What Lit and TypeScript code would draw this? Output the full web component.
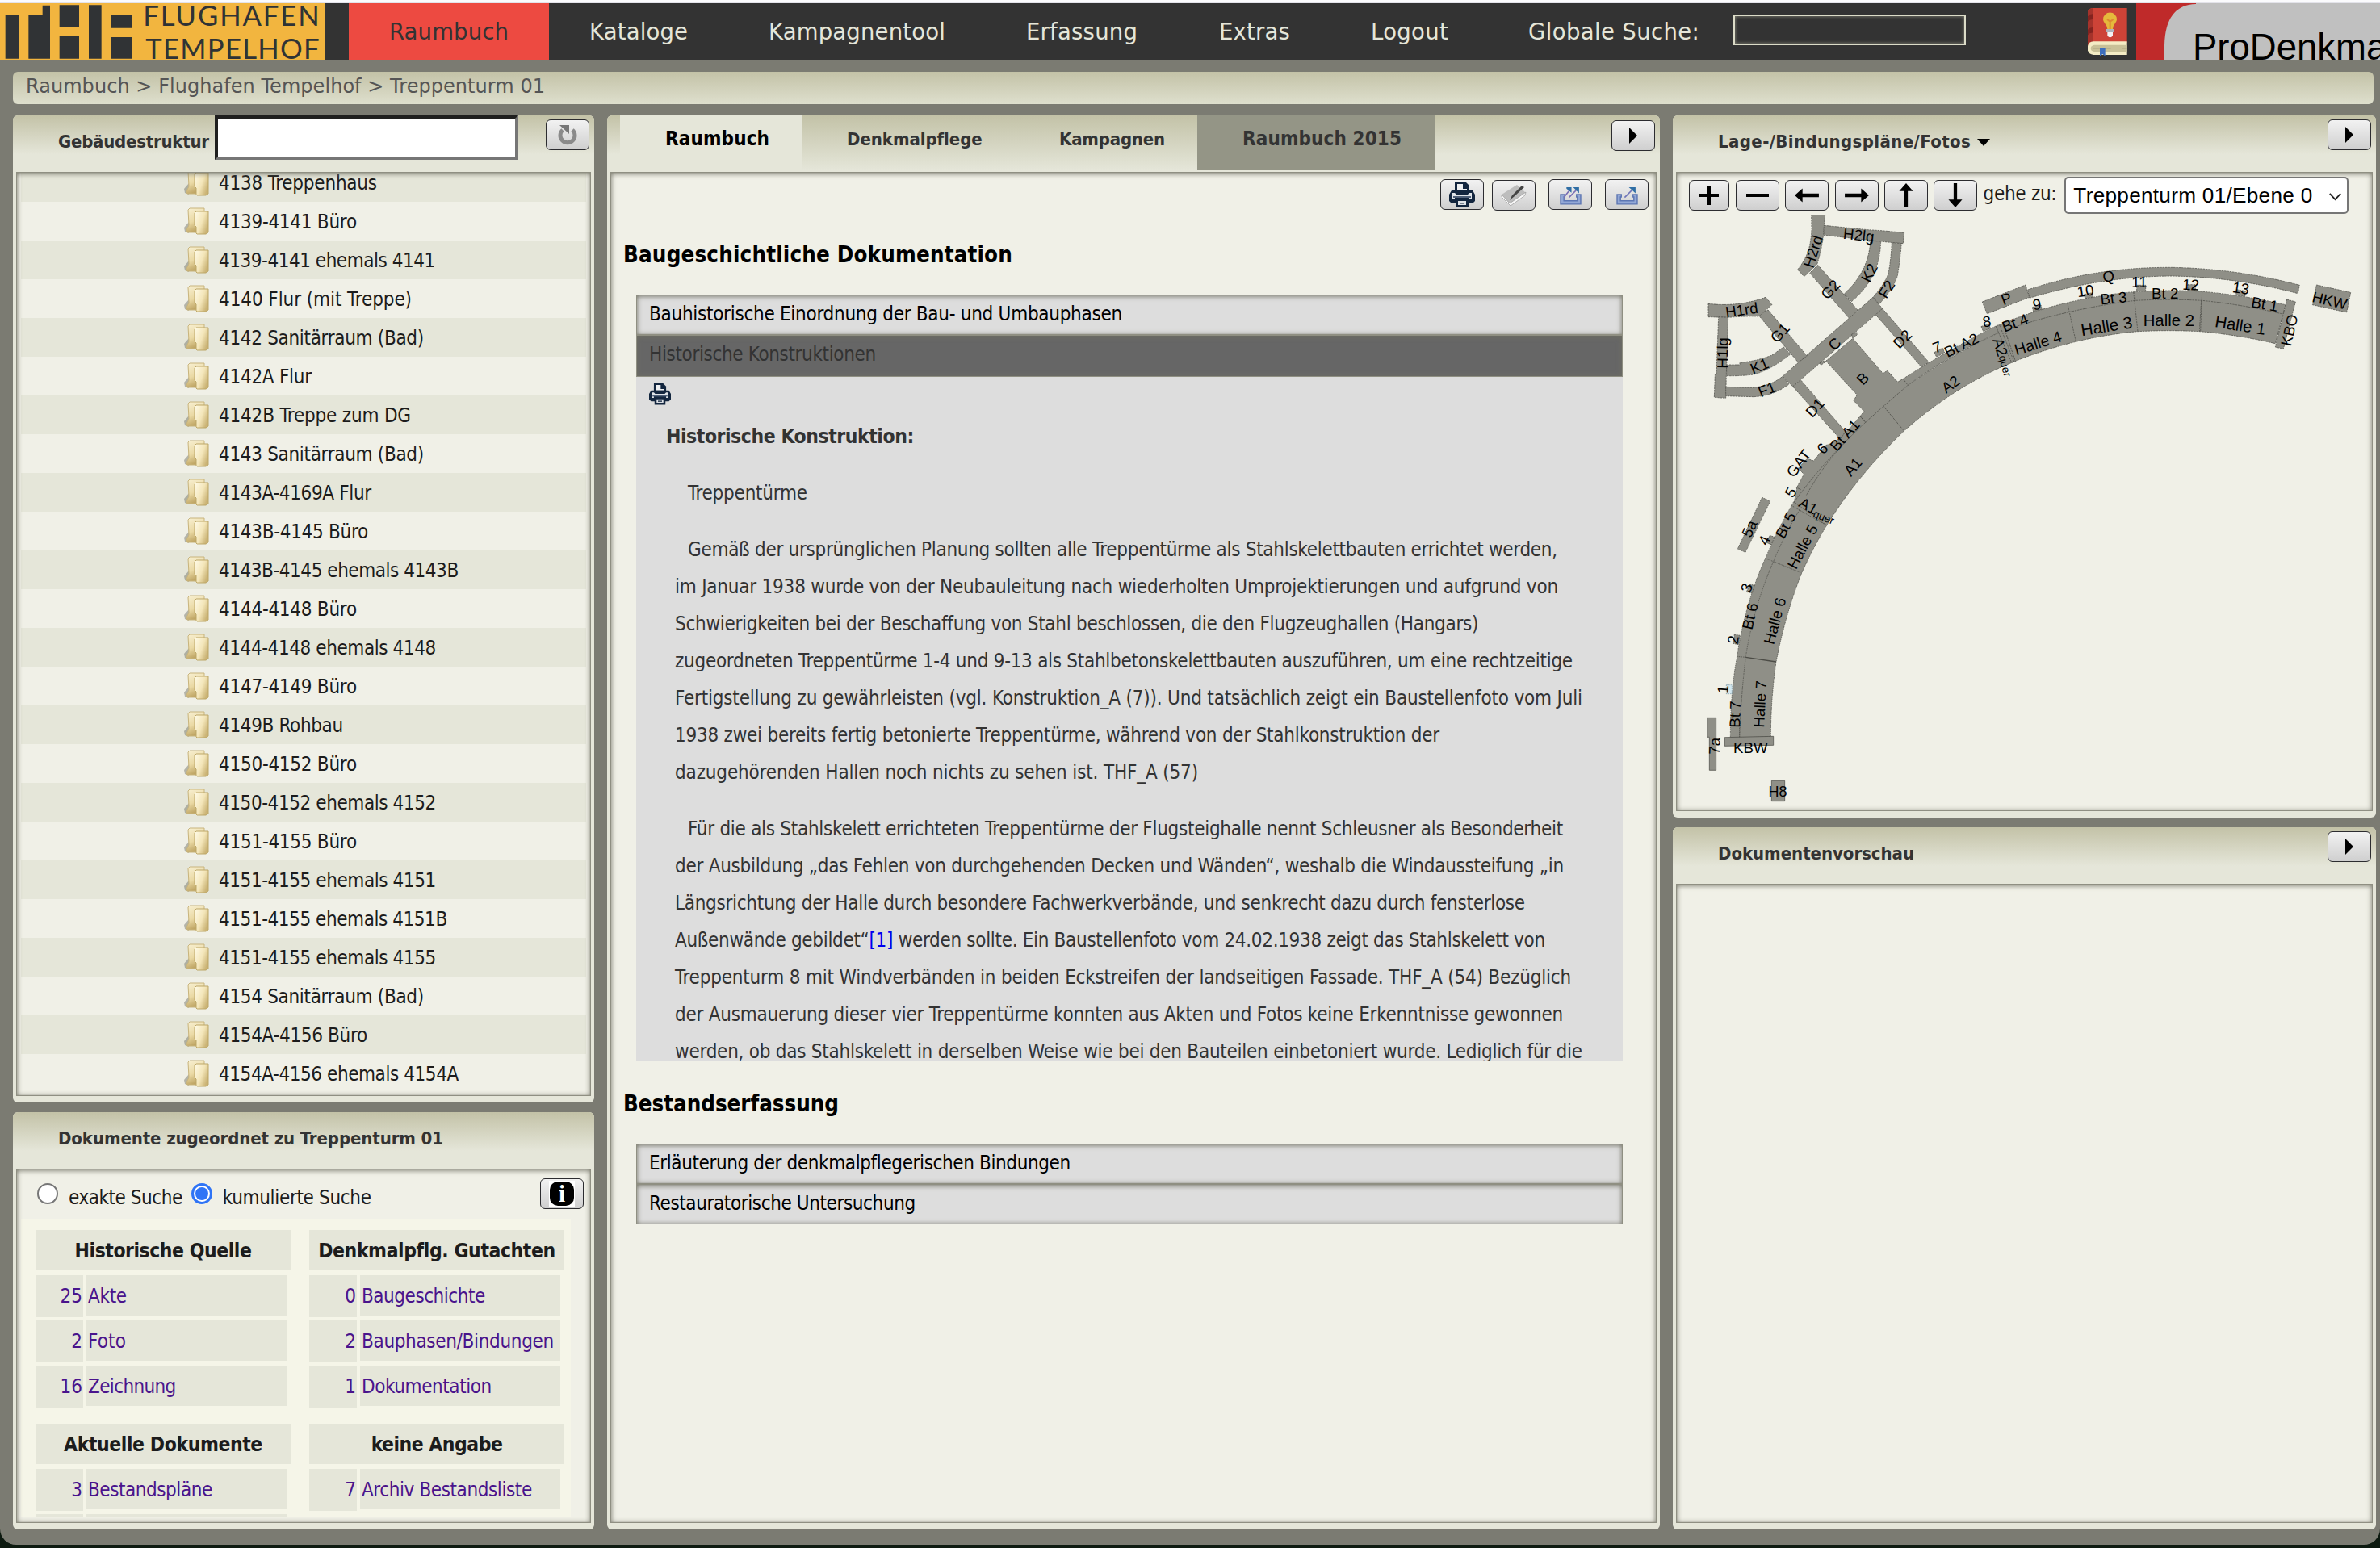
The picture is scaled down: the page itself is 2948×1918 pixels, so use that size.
import { LitElement, html, svg, css } from "lit";
import { customElement } from "lit/decorators.js";
import { classMap } from "lit/directives/class-map.js";

/* A run of text with the width it should occupy; tracking is set after render. */
const t = (content: unknown, width: number, cls = "") =>
  html`<span class="fit ${cls}" data-w=${width}>${content}</span>`;

const TREE: [string, number][] = [
  ["4138 Treppenhaus", 196],
  ["4139-4141 Büro", 171],
  ["4139-4141 ehemals 4141", 268],
  ["4140 Flur (mit Treppe)", 239],
  ["4142 Sanitärraum (Bad)", 254],
  ["4142A Flur", 115],
  ["4142B Treppe zum DG", 238],
  ["4143 Sanitärraum (Bad)", 254],
  ["4143A-4169A Flur", 189],
  ["4143B-4145 Büro", 185],
  ["4143B-4145 ehemals 4143B", 297],
  ["4144-4148 Büro", 171],
  ["4144-4148 ehemals 4148", 269],
  ["4147-4149 Büro", 171],
  ["4149B Rohbau", 154],
  ["4150-4152 Büro", 171],
  ["4150-4152 ehemals 4152", 269],
  ["4151-4155 Büro", 171],
  ["4151-4155 ehemals 4151", 269],
  ["4151-4155 ehemals 4151B", 283],
  ["4151-4155 ehemals 4155", 269],
  ["4154 Sanitärraum (Bad)", 254],
  ["4154A-4156 Büro", 184],
  ["4154A-4156 ehemals 4154A", 297],
];

const PARA1: [unknown, number][] = [
  ["Gemäß der ursprünglichen Planung sollten alle Treppentürme als Stahlskelettbauten errichtet werden,", 1077],
  ["im Januar 1938 wurde von der Neubauleitung nach wiederholten Umprojektierungen und aufgrund von", 1094],
  ["Schwierigkeiten bei der Beschaffung von Stahl beschlossen, die den Flugzeughallen (Hangars)", 995],
  ["zugeordneten Treppentürme 1-4 und 9-13 als Stahlbetonskelettbauten auszuführen, um eine rechtzeitige", 1112],
  ["Fertigstellung zu gewährleisten (vgl. Konstruktion_A (7)). Und tatsächlich zeigt ein Baustellenfoto vom Juli", 1124],
  ["1938 zwei bereits fertig betonierte Treppentürme, während von der Stahlkonstruktion der", 947],
  ["dazugehörenden Hallen noch nichts zu sehen ist. THF_A (57)", 648],
];
const PARA2: [unknown, number][] = [
  ["Für die als Stahlskelett errichteten Treppentürme der Flugsteighalle nennt Schleusner als Besonderheit", 1084],
  ["der Ausbildung „das Fehlen von durchgehenden Decken und Wänden“, weshalb die Windaussteifung „in", 1101],
  ["Längsrichtung der Halle durch besondere Fachwerkverbände, und senkrecht dazu durch fensterlose", 1053],
  [html`Außenwände gebildet“<a class="note">[1]</a> werden sollte. Ein Baustellenfoto vom 24.02.1938 zeigt das Stahlskelett von`, 1078],
  ["Treppenturm 8 mit Windverbänden in beiden Eckstreifen der landseitigen Fassade. THF_A (54) Bezüglich", 1110],
  ["der Ausmauerung dieser vier Treppentürme konnten aus Akten und Fotos keine Erkenntnisse gewonnen", 1100],
  ["werden, ob das Stahlskelett in derselben Weise wie bei den Bauteilen einbetoniert wurde. Lediglich für die", 1124],
];

type Group = { title: string; w: number; rows: [string, string, number][] };
const DOCS: Group[][] = [
  [
    { title: "Historische Quelle", w: 219, rows: [["25", "Akte", 48], ["2", "Foto", 47], ["16", "Zeichnung", 109]] },
    { title: "Aktuelle Dokumente", w: 246, rows: [["3", "Bestandspläne", 154], ["", "", 0]] },
  ],
  [
    { title: "Denkmalpflg. Gutachten", w: 293, rows: [["0", "Baugeschichte", 153], ["2", "Bauphasen/Bindungen", 238], ["1", "Dokumentation", 161]] },
    { title: "keine Angabe", w: 163, rows: [["7", "Archiv Bestandsliste", 211]] },
  ],
];

const NAV: [string, number][] = [
  ["Kataloge", 122],
  ["Kampagnentool", 219],
  ["Erfassung", 138],
  ["Extras", 88],
  ["Logout", 96],
  ["Globale Suche:", 212],
];

const lab = (s: string, x: number, y: number, a: number, size = 56) =>
  svg`<text text-anchor="middle" font-size=${size} dy=${size * 0.35} transform="translate(${x} ${y}) rotate(${a})">${s}</text>`;

const printer = html`<svg class="printer" viewBox="0 0 32 32">
  <path d="M7 12V0h13l5 5v7z" fill="#13263f" />
  <path d="M10 10V3h7v6h5v2H10z" fill="#eef0f2" />
  <path d="M3 11h26l3 5v8l-3 3H3l-3-3v-8z" fill="#13263f" />
  <path d="M4 14h3l2 2h14l2-2h3v8h-3v-3H7v3H4z" fill="#dfe3e8" />
  <path d="M5 18h22v2H5z" fill="#4f6079" />
  <path d="M8 22h16v10H8z" fill="#13263f" />
  <path d="M11 24h10v5H11z" fill="#dfe3e8" />
  <path d="M13 26h6v1.6h-6z" fill="#13263f" />
</svg>`;

const folder = html`<svg class="folder" viewBox="0 0 32 34">
  <defs>
    <linearGradient id="fa" x1="0" y1="0" x2=".3" y2="1">
      <stop offset="0" stop-color="#f8f0d2" /><stop offset=".6" stop-color="#ead9a4" /><stop offset="1" stop-color="#bfa564" />
    </linearGradient>
    <linearGradient id="fb" x1="0" y1="0" x2="1" y2=".6">
      <stop offset="0" stop-color="#fffbe8" /><stop offset=".6" stop-color="#f3e5b8" /><stop offset="1" stop-color="#cbb476" />
    </linearGradient>
  </defs>
  <path d="M0 25l6-7v14l-5-2z" fill="#77776c" opacity=".5" />
  <path d="M5 3l2-2h18v29l-3 1H4q-1-1-1-3l3-6z" fill="url(#fa)" stroke="#c8b47c" stroke-width="1" />
  <path d="M15 32v-8l-2-2V7l2-2h15v26l-3 2H16z" fill="url(#fb)" stroke="#bda768" stroke-width="1" />
</svg>`;

const play = html`<svg class="ico" viewBox="0 0 20 22"><path d="M5 1l10 10L5 21z" fill="#000" /></svg>`;

const arrow = (deg: number) => html`<svg class="arr" viewBox="-15 -15 30 30">
  <g transform="rotate(${deg})"><path d="M-14 0L-5 -8V-2H14V2H-5V8z" fill="#000" /></g>
</svg>`;

const exportIcon = (double: boolean) => html`<svg class="exp" viewBox="0 0 26 22">
  <path d="M1 9.500h5v3H5V17h16v-4.500h-1v-3h5V21H1z" fill="#93a8d6" stroke="#5d76b3" stroke-width="1.400" />
  ${double
    ? svg`<path d="M5 13L12 4M11 13L20 4" stroke="#7a70b5" stroke-width="1.600" fill="none" />
        <path d="M8 1h6v6.500L8 2.500zM16 1h7v7z" fill="#2f6ea5" />`
    : svg`<path d="M10 13L19 4" stroke="#6f74b8" stroke-width="1.600" fill="none" />
        <path d="M15 1h8v7z" fill="#2f6ea5" />`}
</svg>`;

@customElement("app-root")
export class AppRoot extends LitElement {
  static styles = css`
    :host { display: block; width: 2948px; height: 1918px; overflow: hidden; background: #0d1a10;
      font: 24px "DejaVu Sans Condensed", "DejaVu Sans", sans-serif; color: #1c1c1c; }
    * { box-sizing: border-box; }
    .page { width: 2948px; height: 1914px; background: #7b7b72; border-radius: 0 0 20px 20px; display: flex; flex-direction: column; overflow: hidden; }
    .chrome { flex: none; height: 4px; background: #e3e3ea; border-top: 2px solid #fbfbfd; }
    .fit { display: inline-block; white-space: pre; }
    .bar { flex: none; height: 70px; background: #333; display: flex; overflow: hidden; }
    .logo { width: 402px; height: 70px; display: block; flex: none; }
    .nav { flex: none; width: 2184px; font-size: 27.500px; line-height: 70px; color: #e5e6d9; font-family: "DejaVu Sans", sans-serif; display: flex; }
    .active { margin-left: 30px; width: 248px; background: #ed4a41; color: #333; text-align: center; }
    .links { display: grid; grid-template-columns: 222px 319px 239px 188px 195px 254px; margin-left: 50px; }
    .search { width: 288px; height: 38px; margin-top: 14px; border: 2px solid #dcdcc8; background: #333; box-shadow: inset 0 0 4px #8a8a7c; }
    .book { width: 60px; height: 70px; flex: none; }
    .brand { width: 302px; height: 70px; flex: none; }
    .crumbs { flex: none; height: 40px; margin: 15px 8px 14px 16px; padding-left: 16px; border-radius: 6px; line-height: 36px; color: #555;
      background: linear-gradient(#c3c2a7, #dedfcd); font-family: "DejaVu Sans", sans-serif; }
    .cols { flex: 1; display: grid; grid-template-columns: 720px 1304px 871px; gap: 16px; padding: 0 5px 19px 16px; min-height: 0; }
    .col { display: flex; flex-direction: column; gap: 12px; min-height: 0; }
    .panel { border-radius: 6px; background: #e5e6d9; display: flex; flex-direction: column; overflow: hidden; }
    .grow { flex: 1; min-height: 0; }
    .tree-panel { height: 1223px; }
    .map-panel { height: 870px; }
    .head { flex: none; height: 70px; display: flex; line-height: 65px; font-weight: bold; font-size: 22px; color: #333; padding-left: 56px;
      background: linear-gradient(#c3c2a7, #e5e6d9 48px); }
    .box { position: relative; flex: 1; min-height: 0; margin: 0 4px 8px; background: #f0f0e7; overflow: hidden; }
    .box::after, .acc::after { content: ""; position: absolute; inset: 0; pointer-events: none; box-shadow: inset 0 1px 6px 0 #6f6f62; border: 1px solid #8f8f82; }
    .btn { flex: none; width: 54px; height: 38px; border: 1.500px solid #2c2c30; border-radius: 6px; background: linear-gradient(#f2f2f2, #cfcfcf); display: flex; align-items: center; justify-content: center; }
    .ico { width: 20px; height: 22px; }
    .arr { width: 32px; height: 32px; }
    .exp { width: 27px; height: 23px; margin-top: 2px; }
    .printer { width: 32px; height: 32px; display: block; }
    .filter { width: 376px; height: 55px; margin-left: 7px; background: #fff; border: 4px solid; border-color: #1f1f1f #767676 #767676 #1f1f1f; }
    .reload { margin: 5px 0 0 34px; }
    .rows { margin: -11px 6px 0; }
    .row { height: 48px; line-height: 50px; display: flex; padding-left: 202px; background: #f0f0e7; }
    .row.alt { background: #e5e6d9; }
    .folder { width: 32px; height: 34px; margin: 7px 11px 0 0; }
    .radios { height: 62px; display: flex; align-items: flex-start; padding-left: 26px; padding-top: 10px; }
    .radio { width: 26px; height: 26px; border-radius: 50%; border: 2px solid #767676; background: #fff; margin: 8px 13px 0 0; }
    .radio.on { border: 3px solid #2f74f6; padding: 2px; margin-left: 11px; background: #fff; }
    .dot { width: 16px; height: 16px; border-radius: 50%; background: #2f74f6; }
    .rlab { line-height: 52px; }
    .info { margin-left: 209px; margin-top: 2px; }
    .docs { margin: 0 25px 0 6px; height: 369px; overflow: hidden; padding: 14px 18px 0; background: #f5f5e8; display: flex; gap: 23px; }
    .dcol { width: 316px; }
    .dh { height: 50px; line-height: 52px; background: #e5e6d9; font-weight: bold; text-align: center; width: 316px; font-size: 24.500px; }
    .dr { display: grid; grid-template-columns: 59px 248px; gap: 4px; margin-top: 6px; height: 50px; line-height: 52px; color: #4a148c; }
    .dn { background: #e5e6d9; text-align: right; padding-right: 1px; }
    .dt { background: #e5e6d9; padding-left: 2px; height: 50px; }
    .dg { margin-bottom: 22px; }
    .tabs { padding-left: 16px; line-height: 59px; }
    .tab { height: 68px; background: linear-gradient(#c3c2a7, #e5e6d9); }
    .t1 { width: 225px; padding-left: 56px; background: #e5e6d9; color: #000; font-size: 24px; }
    .t2 { width: 263px; padding-left: 56px; }
    .t3 { width: 227px; padding-left: 56px; }
    .t4 { width: 294px; padding-left: 56px; background: #949586; font-size: 24px; }
    .t4b { margin: 6px 0 0 219px; }
    .tools { display: flex; justify-content: flex-end; padding: 9px 10px 0 0; height: 47px; }
    .tools .btn + .btn { margin-left: 16px; }
    .tools .btn + .edit { margin: 1px 0 0 10px; }
    h2 { margin: 35px 0 30px 16px; font-size: 27.500px; line-height: 40px; color: #000; }
    .h2b { margin-top: 32px; margin-bottom: 30px; }
    .acc { position: relative; margin: 0 42px 0 32px; height: 50px; line-height: 48px; padding-left: 16px; background: #ddd; color: #000; }
    .open { height: 52px; background: #666; color: #333; }
    .text { margin: 0 42px 0 32px; height: 848px; background: #ddd; overflow: hidden; color: #333; padding-left: 16px; }
    .text .printer { width: 27px; height: 30px; margin-top: 6px; }
    .ht { line-height: 46px; margin: 15px 0 24px 21px; font-weight: bold; font-size: 24.500px; }
    .para { line-height: 46px; margin: 0 0 24px 32px; white-space: nowrap; }
    .line { display: block; height: 46px; }
    .line.first { padding-left: 16px; }
    .note { color: #0000ee; }
    .tri { width: 16px; height: 10px; margin: 29px 0 0 8px; }
    .pbtn { margin: 5px 6px 0 auto; }
    .mapbar { display: flex; padding: 6px 0 0 16px; height: 53px; }
    .mapbar .btn { margin: 4px 7.300px 0 0; }
    .mapbar .plus { width: 50px; margin-right: 8px; }
    .goto { line-height: 42px; margin-right: 10px; }
    .select { width: 352px; height: 46px; border: 2px solid #767676; border-radius: 5px; background: #fff; color: #000; font: 26.200px/42px "Liberation Sans", sans-serif; padding-left: 9px; display: flex; }
    .chev { width: 17px; height: 11px; margin: 17px 6px 0 auto; }
    .map { display: block; width: 856px; height: 736px; margin-left: 4px; }
  `;

  async firstUpdated() {
    await document.fonts.ready;
    this.renderRoot.querySelectorAll<HTMLElement>(".fit").forEach((el) => {
      const target = Number(el.dataset.w);
      const n = (el.textContent || "").length;
      if (!target || n < 2) return;
      const natural = el.getBoundingClientRect().width;
      el.style.letterSpacing = `${((target - natural) / (n - 0.5)).toFixed(3)}px`;
    });
  }

  private logo() {
    return html`<svg class="logo" viewBox="0 12 1206 210">
      <path d="M0 12h1206v210H0z" fill="#f2b53f" />
      <path d="M20 54h51v164H20zM106 54h52V20h28v198h-80zM221 19h73v83h-73zM221 135h73v83h-73zM330 19h47v199h-47zM412 54h79v50h-79zM412 138h79v80h-79z" fill="#303335" />
      <g fill="#303335" font-family="Lato, sans-serif" font-size="104">
        <text x="532" y="95" textLength="655">FLUGHAFEN</text>
        <text x="541" y="218" textLength="646">TEMPELHOF</text>
      </g>
    </svg>`;
  }

  private book() {
    return html`<svg class="book" viewBox="114 12 180 210">
      <path d="M128 30h132v130H113V50q0-20 22-20z" fill="#cd4337" />
      <path d="M113 50q0-18 22-20v125q-14 0-22 20z" fill="#a5332b" />
      <path d="M113 62q8-12 22-10v20q-14-2-22 10zM113 112q8-12 22-10v20q-14-2-22 10z" fill="#83231f" />
      <path d="M260 154v50H135q-22-2-22-25t22-25z" fill="#f4ecc5" />
      <path d="M260 167v25H138q-13-2-13-12t13-13z" fill="#c9c198" />
      <path d="M135 179h65M240 179h20" stroke="#8f8865" stroke-width="4" />
      <path d="M159 177h20v32l-10-8-10 8z" fill="#3f6fbd" />
      <path d="M187 108q-2-14-10-22-6-7-6-14a25 25 0 0 1 51 0q0 7-6 14-8 8-9 22z" fill="#e5b93c" />
      <path d="M186 72l11 8 12-8M197 80v28" stroke="#df8a33" stroke-width="6" fill="none" />
      <path d="M181 108h32v12h-32z" fill="#aeb3ba" />
      <path d="M187 120h20v10q-2 9-10 9t-10-9z" fill="#f3f3f3" />
    </svg>`;
  }

  private brand() {
    return html`<svg class="brand" viewBox="2646 4 302 70">
      <path d="M2646 4h302v70h-302z" fill="#bf2a2a" />
      <path d="M2681 74V56Q2682 6 2720 5V4H2948V74z" fill="#c0c0c0" />
      <text x="2716" y="74" font-family="Liberation Sans, sans-serif" font-size="45.500" fill="#000">ProDenkmal</text>
    </svg>`;
  }

  private map() {
    return html`<svg class="map" viewBox="2080 266 856 736" font-family="Liberation Sans, sans-serif" fill="#000">
      <g transform="translate(2080 250) scale(.33333)">
        <g fill="#8f8f87" stroke="#4c4c46" stroke-width="2.200" stroke-dasharray="7 3">
          <path d="M491 46L542 49L536 120Q530 175 512 233L464 278L440 252Q470 215 482 175Q492 130 492 100Z" />
          <path d="M538 88L700 104L750 107L836 115L832 155L775 150L537 124Z" />
          <path d="M710 145L749 147Q747 215 722 270Q690 330 640 371L613 342Q655 305 683 252Q708 200 710 145Z" />
          <path d="M790 152L826 155Q820 220 811 275Q795 325 743 380L720 355Q760 310 776 270Q786 225 790 152Z" />
          <path d="M515 235L663 402L635 437L485 265Z" />
          <path d="M720 355L755 397L422 687L384 649Z" />
          <path d="M640 493L660 485L661 494L645 508ZM522 600L540 590L545 594L527 607Z" />
          <path d="M755 397L928 597L899 613L730 420Z" />
          <path d="M330 402L475 573L442 597L290 416Z" />
          <path d="M108 379Q220 392 321 355L345 382L296 426Q250 424 182 430L108 428Z" />
          <path d="M146 428L182 430L175 640L173 730L130 727L133 643L138 643Z" />
          <path d="M176 606L225 606L225 598Q290 592 345 570L388 540L413 567Q340 625 277 642Q230 648 176 647Z" />
          <path d="M173 688L270 691Q340 685 384 649L408 678Q350 722 275 725L173 722Z" />
          <path d="M422 687L452 663L618 855L598 882Z" />
          <path d="M545 592L645 508L757 638L773 628L812 670L832 658L850 682L759 760L692 820L672 797L687 779L648 739L661 718Z" />
          <path d="M948 560L978 543L986 560L956 577ZM1122 464L1150 453L1156 470L1130 482Z" />
          <path d="M832 658Q1000 550 1177 462L1187 487Q1000 570 850 682Z" />
          <path d="M850 682Q1010 570 1187 487L1177 462L1202 452L1250 592Q1030 680 835 852L759 760Z" />
          <path d="M1187 487L1236 600M1190 458L1244 594" fill="none" />
          <path d="M438 1060L463 1013L443 990L475 955L500 963L545 905L560 900L598 882L618 855L640 835L672 797L692 820L759 760L835 852Q660 1020 548 1203L425 1128Z" />
          <path d="M692 820Q540 960 430 1112M620 890Q530 985 470 1095M672 797L692 820M432 1060L452 1070" fill="none" />
        </g>
        ${lab("H2rd", 497, 185, -72)} ${lab("H2lg", 667, 124, 6)} ${lab("K2", 706, 264, -63)} ${lab("F2", 770, 325, -58)}
        ${lab("G2", 562, 326, -48)} ${lab("H1rd", 232, 402, -8)} ${lab("G1", 374, 487, -48)} ${lab("H1lg", 161, 562, -89)}
        ${lab("K1", 298, 610, -22)} ${lab("F1", 326, 697, -22)} ${lab("C", 577, 528, -45)} ${lab("D2", 829, 510, -45)}
        ${lab("B", 682, 657, -45)} ${lab("D1", 504, 765, -47)} ${lab("A2", 1008, 678, -35)} ${lab("Bt A2", 1048, 533, -26)}
        ${lab("7", 958, 540, -20)} ${lab("8", 1143, 445, -8)} ${lab("A2", 1193, 540, 72)} ${lab("quer", 1211, 610, 75, 40)}
        ${lab("GAT", 444, 972, -53)} ${lab("6", 532, 917, -45)} ${lab("Bt A1", 615, 868, -48)} ${lab("A1", 645, 985, -50)}
      </g>
      <g transform="translate(2430 310) scale(.33333)">
        <g fill="#8f8f87" stroke="#4c4c46" stroke-width="2.200" stroke-dasharray="7 3">
          <path d="M245 147Q500 62 780 64Q1020 68 1255 130L1249 161Q1020 100 780 96Q520 97 251 178Z" />
          <path d="M76 192L237 129L251 175L94 236Z" />
          <path d="M262 212L294 204L298 219L266 228ZM455 164L486 158L488 174L458 180ZM650 130L683 130L683 152L650 152ZM840 128L868 128L868 152L840 152ZM1021 146L1054 152L1052 172L1019 166Z" />
          <path d="M152 272Q270 224 392 195Q520 165 638 155Q770 146 890 153Q1050 168 1203 203L1165 347Q1030 315 885 302Q770 296 654 302Q540 312 424 340Q310 368 199 412Z" />
          <path d="M160 298Q280 256 398 230Q520 202 645 187Q770 180 893 187Q1050 203 1192 237M392 195L424 340M638 155L654 302M642 155L645 187M893 153L887 302M890 187L883 302" fill="none" />
          <path d="M1208 183L1240 192L1195 367L1165 360Z" />
          <path d="M1318 129L1445 157L1430 231L1303 203Z" />
        </g>
        ${lab("P", 165, 180, -20)} ${lab("Q", 545, 97, -5)} ${lab("9", 279, 201, -8)} ${lab("10", 459, 151, -8)}
        ${lab("11", 660, 119, 0)} ${lab("12", 851, 128, 3)} ${lab("13", 1037, 141, 8)} ${lab("Bt 4", 198, 270, -20)}
        ${lab("Bt 3", 564, 178, -6)} ${lab("Bt 2", 755, 160, 0)} ${lab("Bt 1", 1126, 200, 10)} ${lab("Halle 4", 283, 345, -17, 58)}
        ${lab("Halle 3", 538, 282, -9, 62)} ${lab("Halle 2", 769, 262, 0, 61)} ${lab("Halle 1", 1035, 279, 9, 61)}
        ${lab("KBO", 1217, 297, -77)} ${lab("HKW", 1367, 187, 13)}
      </g>
      <g transform="translate(2080 540) scale(.33333)">
        <g fill="#8f8f87" stroke="#4c4c46" stroke-width="2.200" stroke-dasharray="5 3">
          <path d="M425 245Q360 360 320 455Q285 535 268 590Q230 710 215 820Q190 950 190 1124L340 1118Q340 980 360 840Q395 660 455 510Q500 410 548 333Z" />
          <path d="M447 275Q390 370 350 467Q275 640 247 822Q230 960 224 1122M415 258L548 333M320 455L455 510M213 820L247 823M224 1085V1122" fill="none" />
          <path d="M247 823L360 840" stroke-width="4" stroke-dasharray="none" />
          <path d="M169 1121L350 1117L350 1150L169 1153Z" stroke-dasharray="none" />
          <path d="M104 1048H137V1243H112V1120H104Z" stroke-dasharray="none" />
          <path d="M343 1282H392V1358H343Z" stroke-dasharray="none" />
          <path d="M308 229L338 243L246 433L217 420Z" />
          <path d="M336 370L354 376L342 404L326 398ZM262 552L280 556L270 585L250 580ZM205 738L226 742L220 776L201 772Z" />
          <path d="M175 926H196V959H175Z" fill="#d3e8f0" stroke="#7f9aa6" />
        </g>
        ${lab("5", 414, 210, -60)} ${lab("A1", 480, 260, 28)} ${lab("quer", 537, 302, 22, 40)} ${lab("Bt 5", 395, 332, -62)}
        ${lab("Halle 5", 458, 412, -62, 57)} ${lab("5a", 260, 345, -66)} ${lab("4", 316, 388, -66)} ${lab("3", 250, 565, -72)}
        ${lab("Bt 6", 263, 670, -77)} ${lab("Halle 6", 355, 688, -75, 57)} ${lab("2", 200, 758, -80)} ${lab("1", 162, 943, -86)}
        ${lab("Bt 7", 207, 1035, -89)} ${lab("Halle 7", 300, 997, -87, 56)} ${lab("7a", 131, 1153, -88)} ${lab("KBW", 265, 1158, 0)}
        ${lab("H8", 366, 1323, 0, 54)}
      </g>
    </svg>`;
  }

  private para(lines: [unknown, number][]) {
    return html`<div class="para">
      ${lines.map(([s, w], i) => html`<span class=${classMap({ line: true, first: i === 0 })}>${t(s, w)}</span>`)}
    </div>`;
  }

  render() {
    return html`<div class="page">
      <div class="chrome"></div>
      <div class="bar">
        ${this.logo()}
        <div class="nav">
          <div class="active">${t("Raumbuch", 148)}</div>
          <div class="links">
            ${NAV.map(([s, w]) => html`<div>${t(s, w)}</div>`)}
          </div>
          <div class="search"></div>
        </div>
        ${this.book()} ${this.brand()}
      </div>
      <div class="crumbs">${t("Raumbuch > Flughafen Tempelhof > Treppenturm 01", 643)}</div>
      <div class="cols">
        <div class="col">
          <div class="panel tree-panel">
            <div class="head">
              ${t("Gebäudestruktur", 187)}
              <div class="filter"></div>
              <div class="btn reload">
                <svg class="arr" viewBox="-16 -16 32 32"><path d="M-6 -6A9 9 0 1 0 6 -6" fill="none" stroke="#8a8a8a" stroke-width="5" /><path d="M-10 -12H2V-1Z" fill="#777" /></svg>
              </div>
            </div>
            <div class="box">
              <div class="rows">
                ${TREE.map(([s, w], i) => html`<div class=${classMap({ row: true, alt: i % 2 === 0 })}>${folder}${t(s, w)}</div>`)}
              </div>
            </div>
          </div>
          <div class="panel grow">
            <div class="head">${t("Dokumente zugeordnet zu Treppenturm 01", 477)}</div>
            <div class="box">
              <div class="radios">
                <div class="radio"></div><div class="rlab">${t("exakte Suche", 141)}</div>
                <div class="radio on"><div class="dot"></div></div><div class="rlab">${t("kumulierte Suche", 184)}</div>
                <div class="btn info">
                  <svg class="arr" viewBox="0 0 32 32"><path d="M0 0h32v32H0z" fill="#fff" /><rect x="1" y="1" width="30" height="30" rx="10" /><text x="16" y="26" text-anchor="middle" font-family="Liberation Serif, serif" font-weight="bold" font-size="29" fill="#fff">i</text></svg>
                </div>
              </div>
              <div class="docs">
                ${DOCS.map((col) => html`<div class="dcol">
                  ${col.map((g) => html`<div class="dg">
                    <div class="dh">${t(g.title, g.w)}</div>
                    ${g.rows.map(([n, s, w]) => html`<div class="dr"><div class="dn">${n}</div><div class="dt">${t(s, w)}</div></div>`)}
                  </div>`)}
                </div>`)}
              </div>
            </div>
          </div>
        </div>
        <div class="col">
          <div class="panel grow">
            <div class="head tabs">
              <div class="tab t1">${t("Raumbuch", 129)}</div>
              <div class="tab t2">${t("Denkmalpflege", 167)}</div>
              <div class="tab t3">${t("Kampagnen", 131)}</div>
              <div class="tab t4">${t("Raumbuch 2015", 197)}</div>
              <div class="btn t4b">${play}</div>
            </div>
            <div class="box">
              <div class="tools">
                <div class="btn">${printer}</div>
                <div class="btn edit">
                  <svg class="arr" viewBox="0 0 32 28"><path d="M1 13L20 1L31 11L11 26Z" fill="#bdbdbd" /><path d="M1 13l10 11L31 10l-1 4L12 27 1 16z" fill="#f8f8f8" stroke="#999" stroke-width=".7" /><path d="M11 20L14 14L26 2L29 4L17 15Z" fill="#444" /></svg>
                </div>
                <div class="btn">${exportIcon(true)}</div>
                <div class="btn">${exportIcon(false)}</div>
              </div>
              <h2>${t("Baugeschichtliche Dokumentation", 482)}</h2>
              <div class="acc">${t("Bauhistorische Einordnung der Bau- und Umbauphasen", 586)}</div>
              <div class="acc open">${t("Historische Konstruktionen", 281)}</div>
              <div class="text">
                ${printer}
                <div class="ht">${t("Historische Konstruktion:", 307)}</div>
                ${this.para([["Treppentürme", 148]])} ${this.para(PARA1)} ${this.para(PARA2)}
              </div>
              <h2 class="h2b">${t("Bestandserfassung", 267)}</h2>
              <div class="acc">${t("Erläuterung der denkmalpflegerischen Bindungen", 522)}</div>
              <div class="acc">${t("Restauratorische Untersuchung", 330)}</div>
            </div>
          </div>
        </div>
        <div class="col">
          <div class="panel map-panel">
            <div class="head">
              ${t("Lage-/Bindungspläne/Fotos", 313)}
              <svg class="tri" viewBox="0 0 16 10"><path d="M0 0h16L8 9z" /></svg>
              <div class="btn pbtn">${play}</div>
            </div>
            <div class="box">
              <div class="mapbar">
                <div class="btn plus"><svg class="arr" viewBox="-16 -16 32 32"><path d="M-12 -2H-2V-12H2V-2H12V2H2V12H-2V2H-12Z" /></svg></div>
                <div class="btn"><svg class="arr" viewBox="-16 -16 32 32"><path d="M-14 -2H14V2H-14Z" /></svg></div>
                ${[0, 180, 90, 270].map((d) => html`<div class="btn">${arrow(d)}</div>`)}
                <div class="goto">${t("gehe zu:", 91)}</div>
                <div class="select">
                  ${t("Treppenturm 01/Ebene 0", 296)}
                  <svg class="chev" viewBox="0 0 19 12"><path d="M2 2l7.500 8L17 2" fill="none" stroke="#222" stroke-width="2" /></svg>
                </div>
              </div>
              ${this.map()}
            </div>
          </div>
          <div class="panel grow">
            <div class="head">
              ${t("Dokumentenvorschau", 243)}
              <div class="btn pbtn">${play}</div>
            </div>
            <div class="box"></div>
          </div>
        </div>
      </div>
    </div>`;
  }
}
